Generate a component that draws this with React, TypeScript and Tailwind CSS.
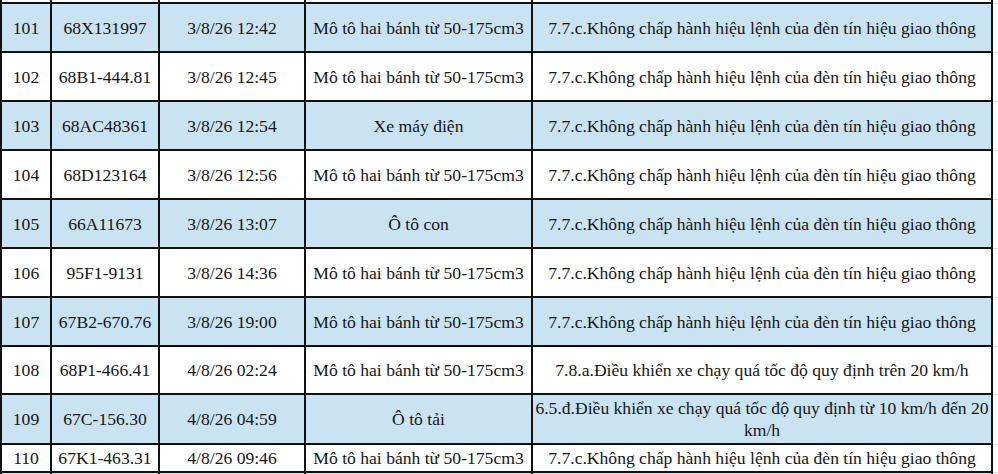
import React from "react";

type Row = {
  no: string;
  plate: string;
  time: string;
  type: string;
  violation: React.ReactNode;
  h: string;
  blue: boolean;
};

const V1 = "7.7.c.Không chấp hành hiệu lệnh của đèn tín hiệu giao thông";
const MOTO = "Mô tô hai bánh từ 50-175cm3";

const rows: Row[] = [
  { no: "101", plate: "68X131997", time: "3/8/26 12:42", type: MOTO, violation: V1, h: "h-[49px]", blue: true },
  { no: "102", plate: "68B1-444.81", time: "3/8/26 12:45", type: MOTO, violation: V1, h: "h-[49px]", blue: false },
  { no: "103", plate: "68AC48361", time: "3/8/26 12:54", type: "Xe máy điện", violation: V1, h: "h-[49px]", blue: true },
  { no: "104", plate: "68D123164", time: "3/8/26 12:56", type: MOTO, violation: V1, h: "h-[49px]", blue: false },
  { no: "105", plate: "66A11673", time: "3/8/26 13:07", type: "Ô tô con", violation: V1, h: "h-[49px]", blue: true },
  { no: "106", plate: "95F1-9131", time: "3/8/26 14:36", type: MOTO, violation: V1, h: "h-[49px]", blue: false },
  { no: "107", plate: "67B2-670.76", time: "3/8/26 19:00", type: MOTO, violation: V1, h: "h-[49px]", blue: true },
  { no: "108", plate: "68P1-466.41", time: "4/8/26 02:24", type: MOTO, violation: "7.8.a.Điều khiển xe chạy quá tốc độ quy định trên 20 km/h", h: "h-[48px]", blue: false },
  {
    no: "109",
    plate: "67C-156.30",
    time: "4/8/26 04:59",
    type: "Ô tô tải",
    violation: (
      <>
        6.5.đ.Điều khiển xe chạy quá tốc độ quy định từ 10 km/h đến 20
        <br />
        km/h
      </>
    ),
    h: "h-[50px]",
    blue: true,
  },
  { no: "110", plate: "67K1-463.31", time: "4/8/26 09:46", type: MOTO, violation: V1, h: "h-[28px]", blue: false },
  { no: "", plate: "", time: "", type: "", violation: "", h: "h-[40px]", blue: true },
];

function Cell({ children, w, blue }: { children?: React.ReactNode; w: string; blue: boolean }) {
  return (
    <div
      className={`${w} shrink-0 h-full flex items-center justify-center text-center whitespace-nowrap border-r-2 border-b-2 border-[#111] leading-[22px] ${
        blue ? "bg-[#c9e3f2]" : "bg-white"
      }`}
    >
      {children}
    </div>
  );
}

export default function App() {
  return (
    <div className="w-[998px] h-[474px] overflow-hidden bg-white text-[17.6px] text-[#161616] font-['Liberation_Serif','Times_New_Roman',serif]">
      <div className="flex h-[4px]">
        <div className="w-[993px] flex h-full border-l-2 border-[#111]">
          <Cell w="w-[50px]" blue={false} />
          <Cell w="w-[108px]" blue={false} />
          <Cell w="w-[146px]" blue={false} />
          <Cell w="w-[227px]" blue={false} />
          <Cell w="w-[460px]" blue={false} />
        </div>
        <div className="flex-1 border-b border-[#dcdcdc]" />
      </div>
      {rows.map((r, i) => (
        <div key={i} className={`flex ${r.h}`}>
          <div className="w-[993px] flex h-full border-l-2 border-[#111]">
            <Cell w="w-[50px]" blue={r.blue}>{r.no}</Cell>
            <Cell w="w-[108px]" blue={r.blue}>{r.plate}</Cell>
            <Cell w="w-[146px]" blue={r.blue}>{r.time}</Cell>
            <Cell w="w-[227px]" blue={r.blue}>{r.type}</Cell>
            <Cell w="w-[460px]" blue={r.blue}>{r.violation}</Cell>
          </div>
          <div className="flex-1 border-b border-[#dcdcdc]" />
        </div>
      ))}
    </div>
  );
}
